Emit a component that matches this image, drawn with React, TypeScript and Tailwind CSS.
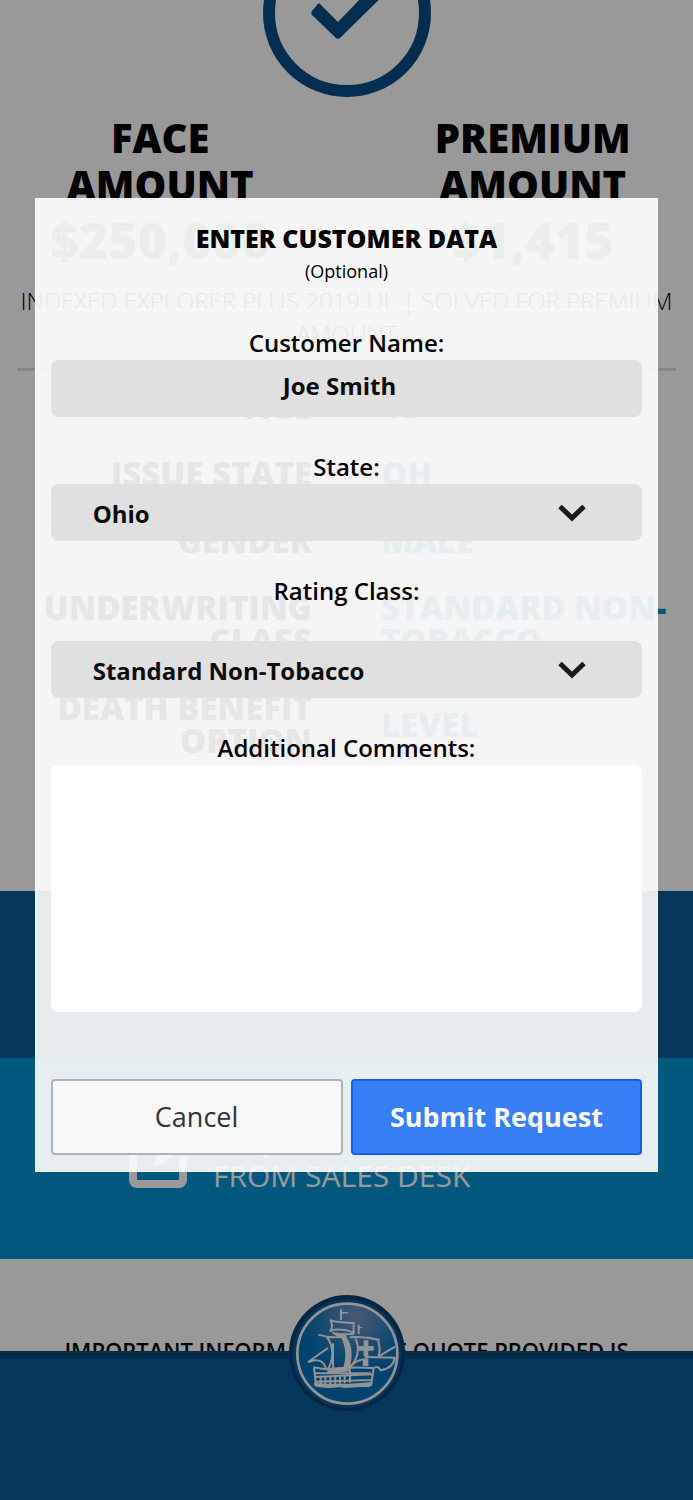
import React from "react";

// --- Data ---
type Detail = {
  label: string;
  value: string;
};

const DETAILS: Detail[] = [
  { label: "Age", value: "45" },
  { label: "Issue State", value: "OH" },
  { label: "Gender", value: "Male" },
  { label: "Underwriting Class", value: "Standard Non-Tobacco" },
  { label: "Death Benefit Option", value: "Level" },
];

const STATES = ["Ohio", "Indiana", "Kentucky", "Michigan"];

const RATING_CLASSES = ["Standard Non-Tobacco", "Standard Tobacco", "Preferred Non-Tobacco"];

// --- Icons ---
const CheckBadge = () => (
  <svg viewBox="0 0 168 97" className="mx-auto block h-[97px] w-[168px]" aria-hidden="true">
    <circle cx="84" cy="13" r="78" fill="none" stroke="#084e85" strokeWidth="12" />
    <path
      d="M49 15c-1-1-1-3 0-4l5-6c1-2 3-2 4 0l17 17 48-50 12 9-58 57c-1 1-3 1-4 0z"
      fill="#084e85"
    />
  </svg>
);

const EditIcon = () => (
  <svg viewBox="0 0 60 60" className="h-[60px] w-[60px] shrink-0" fill="none" aria-hidden="true">
    <path d="M36 5H9a4 4 0 0 0-4 4v42a4 4 0 0 0 4 4h42a4 4 0 0 0 4-4V28" stroke="#fff" strokeWidth="8" />
    <path d="M25 37l3-11L48 6l8 8-20 20z" fill="#fff" />
  </svg>
);

const ShipLogo = () => (
  <svg viewBox="54 42 350 354" className="h-[118px] w-[117px]" aria-hidden="true">
    <defs>
      <radialGradient id="sky" cx="0.6" cy="0.12" r="0.55">
        <stop offset="0" stopColor="#7796c0" />
        <stop offset="1" stopColor="#0070b8" />
      </radialGradient>
    </defs>
    <circle cx="229" cy="219" r="174" fill="#05426f" />
    <circle cx="229" cy="221" r="163" fill="#065a97" />
    <circle cx="230" cy="221" r="150" fill="url(#sky)" stroke="#f4f5f8" strokeWidth="8" />
    <g stroke="#f4f5f8" strokeWidth="6" fill="none" strokeLinejoin="round">
      <path d="M211 88v32M264 134v28" />
      <path d="M177 121c25 6 50 8 75 8M180 122c6 10 4 22-1 31M250 130c-3 12-3 20 0 29M176 153c25-8 50-4 75 6" />
      <path d="M143 164c30 10 60 9 85 5M168 170c22 30 22 70 2 100M187 190v74" />
      <path d="M237 172c30-2 60 0 90 8M322 180c6 18 6 36 1 50M255 175c14 35 5 60-15 86" />
      <path d="M112 246l60-42M114 246c20-10 46-8 52 22M323 230l50-30M282 231l90 2c-2 20-18 34-42 38-5-10-12-12-18-8" />
      <path d="M128 262l36 6c50-6 90-8 145-4l-8 54M130 262l6 56M135 280h166M132 291l172-8M134 305l168-5" />
      <path d="M150 291v22M164 291v22M179 290v22M194 290v22M208 289v22M222 288v22M238 272v36" />
      <path d="M238 262c15-20 30-24 52-24" />
    </g>
    <g fill="#f4f5f8">
      <path d="M211 94c9 6 16-1 25 5-9 3-16 0-25 5zM264 139c6 4 9 0 15 3-6 2-9 1-15 5z" />
      <path d="M178 152c20 10 50 8 74 6l-4 8c-24-4-30 4-36 6-14-2-20-6-34-20z" />
      <path d="M205 162c20 30 26 70 10 108l20 0c14-40 10-78-12-106z" />
      <path d="M279 181h14v17h16v14h-16v16h-14v-16h-16v-14h16z" />
      <path d="M276 236h17v22h-17zM170 268l70-10v16l-70 8z" />
      <path d="M130 308c60 6 120 4 174-2l-8 16c-50-4-60 6-90-1-30 5-50 3-74-2z" />
    </g>
  </svg>
);

const Chevron = () => (
  <svg
    viewBox="0 0 28 18"
    className="pointer-events-none absolute top-5 right-14 h-[18px] w-7"
    fill="none"
    aria-hidden="true"
  >
    <path d="M2 2.5l12 11.5 12-11.5" stroke="#1a1a1a" strokeWidth="5" />
  </svg>
);

// --- Form pieces ---
type SelectFieldProps = {
  id: string;
  label: string;
  options: string[];
  spaced?: boolean;
};

const LABEL = "block text-center text-2xl leading-[34px] font-semibold";

const SelectField = ({ id, label, options, spaced }: SelectFieldProps) => (
  <div className="mb-[33px]">
    <label htmlFor={id} className={spaced ? `${LABEL} mb-[33px]` : LABEL}>
      {label}
    </label>
    <div className="relative">
      <select
        id={id}
        className="block h-[57px] w-full appearance-none rounded-lg bg-[#e0e0e0] pt-[2px] pl-[42px] text-2xl font-bold text-[#0c0c0c]"
      >
        {options.map((option) => (
          <option key={option}>{option}</option>
        ))}
      </select>
      <Chevron />
    </div>
  </div>
);

const CustomerDialog = () => (
  <form
    role="dialog"
    aria-label="Enter customer data"
    className="w-[90%] border border-white/50 bg-white/90"
  >
    <div className="h-[111px] border-b-2 border-white/40 pt-[22px] text-center">
      <h2 className="text-[25px] leading-[34px] font-extrabold">ENTER CUSTOMER DATA</h2>
      <p className="text-lg leading-8">(Optional)</p>
    </div>

    <div className="px-[15px] py-4">
      <div className="mb-[33px]">
        <label htmlFor="customer" className={LABEL}>
          Customer Name:
        </label>
        <input
          id="customer"
          type="text"
          defaultValue="Joe Smith"
          className="block h-[57px] w-full rounded-lg bg-[#e0e0e0] pr-[14px] pb-[6px] text-center text-2xl font-bold text-[#0c0c0c]"
        />
      </div>

      <SelectField id="state" label="State:" options={STATES} />
      <SelectField id="rating" label="Rating Class:" options={RATING_CLASSES} spaced />

      <label htmlFor="comments" className={LABEL}>
        Additional Comments:
      </label>
      <textarea id="comments" className="block h-[247px] w-full resize-none rounded-lg bg-white p-4 text-xl" />

      <div className="mt-[67px] grid grid-cols-2 gap-2">
        <button
          type="button"
          className="h-[76px] rounded border-2 border-[#b0b3b4] bg-[#f8f8f8] text-[27px] text-[#333]"
        >
          Cancel
        </button>
        <button
          type="submit"
          className="h-[76px] rounded border-2 border-[#0c60ee] bg-[#387ef5] text-[27px] font-bold text-white"
        >
          Submit Request
        </button>
      </div>
    </div>
  </form>
);

// --- Page behind the dialog ---
const QuotePage = () => (
  <main className="bg-white">
    <CheckBadge />

    <section className="mx-[17px] mt-[17px] grid grid-cols-2 gap-[86px] text-center font-extrabold">
      <div>
        <h2 className="text-[40px] leading-[47px]">FACE AMOUNT</h2>
        <p className="text-[50px] leading-[64px] text-[#5f8a55]">$250,000</p>
      </div>
      <div>
        <h2 className="text-[40px] leading-[47px]">PREMIUM AMOUNT</h2>
        <p className="text-[50px] leading-[64px] text-[#5f8a55]">$1,415</p>
      </div>
    </section>

    <p className="mx-[17px] mt-3 border-b-[3px] border-[#e0e0e0] pb-[18px] text-center text-2xl leading-[33px] font-light">
      INDEXED EXPLORER PLUS 2019 UL | SOLVED FOR PREMIUM AMOUNT
    </p>

    <dl className="mx-[17px] mt-[2px] mb-[117px] text-[33px] leading-[33px] font-extrabold uppercase">
      {DETAILS.map((item) => (
        <div key={item.label} className="grid grid-cols-[295px_1fr] items-center gap-[69px] py-[17px]">
          <dt className="text-right text-black">{item.label}</dt>
          <dd className="text-[#0093d4]">{item.value}</dd>
        </div>
      ))}
    </dl>

    <div className="h-[167px] bg-[#0a5c96]" />
    <a href="#request" className="flex h-[201px] items-center gap-[25px] bg-[#0093d4] pl-[128px] text-[30px] leading-[34px] font-medium text-white">
      <EditIcon />
      <span>
        REQUEST ILLUSTRATION
        <br />
        FROM SALES DESK
      </span>
    </a>
    <p className="px-14 pt-[75px] pb-[134px] text-center text-[22px] leading-[33px] font-semibold">
      IMPORTANT INFORMATION: THE QUOTE PROVIDED IS
    </p>
  </main>
);

export default function App() {
  return (
    <div className="relative h-screen overflow-hidden font-['Open_Sans',sans-serif] text-black">
      <QuotePage />

      <footer className="absolute inset-x-0 bottom-0 h-[149px] border-t-8 border-[#084a7c] bg-[#0a5c96]">
        <div className="absolute -top-[65px] left-1/2 -translate-x-1/2">
          <ShipLogo />
        </div>
      </footer>

      <div className="absolute inset-0 flex items-start justify-center bg-black/40 pt-[198px]">
        <CustomerDialog />
      </div>
    </div>
  );
}
